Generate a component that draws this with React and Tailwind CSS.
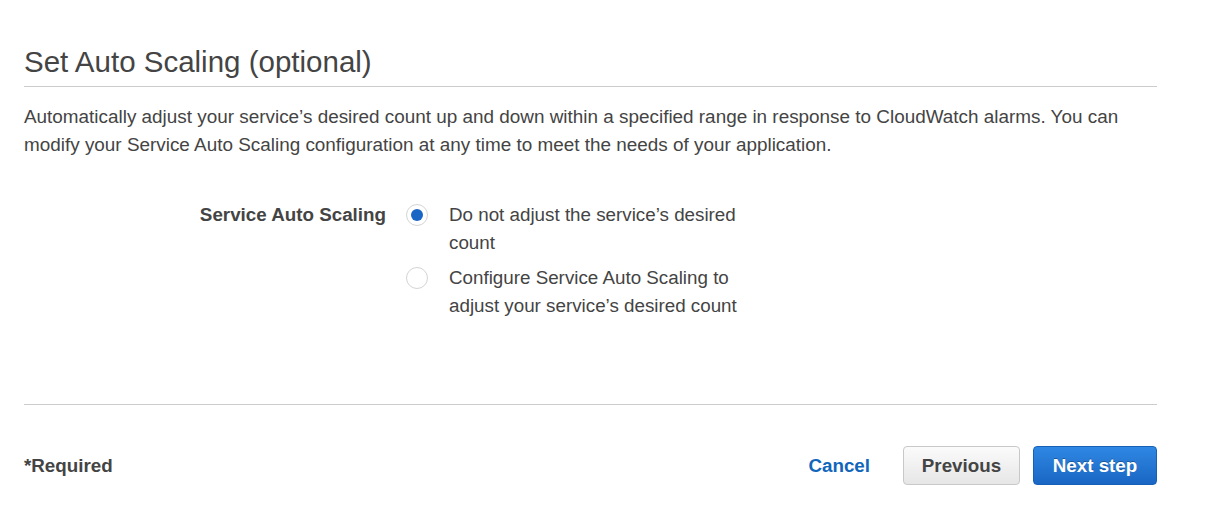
import React, { useState } from "react";

const options = [
    { id: "none", lines: ["Do not adjust the service’s desired", "count"] },
    { id: "configure", lines: ["Configure Service Auto Scaling to", "adjust your service’s desired count"] },
];

// Single radio option row
const RadioOption = ({ option, checked, onSelect }) => (
    <label className="flex items-start gap-[21px] cursor-pointer" onClick={() => onSelect(option.id)}>
        <span className="mt-[3px] flex h-[22px] w-[22px] shrink-0 items-center justify-center rounded-full border border-[#d4d4d4] bg-white">
            {checked && <span className="h-[12px] w-[12px] rounded-full bg-[#1a66c4]" />}
        </span>
        <span className="leading-[28px]">
            {option.lines.map((line, i) => (
                <span key={i} className="block">
                    {line}
                </span>
            ))}
        </span>
    </label>
);

export default function App() {
    const [selected, setSelected] = useState("none");

    return (
        <div
            className="min-h-screen bg-white text-[#444] pl-6"
            style={{ fontFamily: '"Liberation Sans", Arial, sans-serif' }}
        >
            <div className="w-[1133px] pt-[44px]">
                {/* Header */}
                <h2 className="text-[29.5px] leading-[36px] pb-[6px] border-b border-[#ccc]">
                    Set Auto Scaling (optional)
                </h2>

                <p className="mt-4 text-[18.9px] leading-[28px]">
                    Automatically adjust your service’s desired count up and down within a specified range in response to
                    CloudWatch alarms. You can modify your Service Auto Scaling configuration at any time to meet the needs
                    of your application.
                </p>

                {/* Form row */}
                <div className="mt-[42px] flex text-[18.8px]">
                    <div className="w-[382px] text-right font-bold leading-[28px] pr-5">Service Auto Scaling</div>
                    <div className="flex flex-col gap-[7px]">
                        {options.map((opt) => (
                            <RadioOption
                                key={opt.id}
                                option={opt}
                                checked={selected === opt.id}
                                onSelect={setSelected}
                            />
                        ))}
                    </div>
                </div>

                <div className="mt-[84px] border-t border-[#ccc]" />

                {/* Footer */}
                <div className="mt-[41px] flex items-center text-[18.8px] font-bold">
                    <span className="flex-1 pt-[2px]">*Required</span>
                    <button className="text-[#1166bb] mr-[33px] pt-[2px]">Cancel</button>
                    <button className="h-[39px] w-[117px] rounded-[4px] border border-[#c8c8c8] bg-gradient-to-b from-[#fbfbfb] to-[#e6e6e6] pt-[2px] text-[#444]">
                        Previous
                    </button>
                    <button className="ml-[13px] h-[39px] w-[124px] rounded-[4px] border border-[#1660b8] bg-gradient-to-b from-[#2f88e3] to-[#1a66c4] pt-[2px] text-white [text-shadow:0_-1px_0_rgba(0,0,0,0.3)]">
                        Next step
                    </button>
                </div>
            </div>
        </div>
    );
}
